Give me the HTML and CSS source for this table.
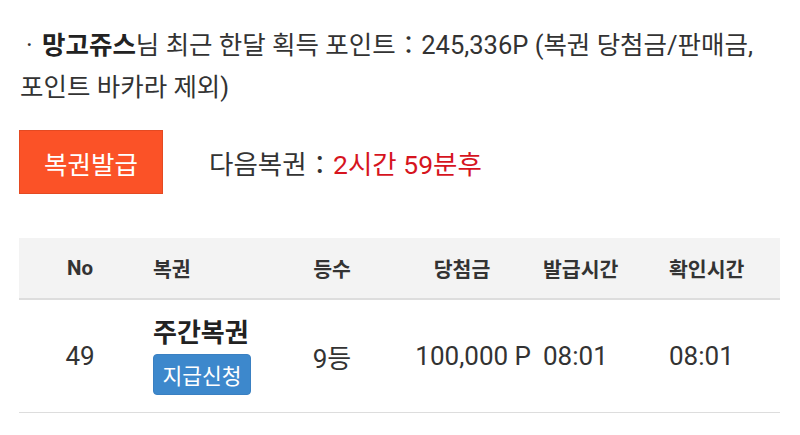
FILE: index.html
```html
<!DOCTYPE html>
<html lang="ko">
<head>
<meta charset="utf-8">
<link rel="stylesheet" href="styles.css">
</head>
<body>
<div class="page">
  <p class="info">· <b>망고쥬스</b>님 최근 한달 획득 포인트：245,336P (복권 당첨금/판매금, 포인트 바카라 제외)</p>
  <div class="actions">
    <button class="issue">복권발급</button>
    <div class="next">다음복권：<span class="remain">2시간 59분후</span></div>
  </div>
  <div class="table">
    <div class="row head">
      <div class="c c-no">No</div>
      <div class="c c-name">복권</div>
      <div class="c c-rank">등수</div>
      <div class="c c-prize">당첨금</div>
      <div class="c c-time">발급시간</div>
      <div class="c c-time">확인시간</div>
    </div>
    <div class="row body">
      <div class="c c-no">49</div>
      <div class="c c-name">
        <div class="ticket">주간복권</div>
        <button class="claim">지급신청</button>
      </div>
      <div class="c c-rank">9등</div>
      <div class="c c-prize">100,000 P</div>
      <div class="c c-time">08:01</div>
      <div class="c c-time">08:01</div>
    </div>
  </div>
</div>
</body>
</html>
```
FILE: styles.css
```css
html, body {
  margin: 0;
  padding: 0;
  background: #ffffff;
}
body {
  font-family: Roboto, "Noto Sans CJK KR", sans-serif;
  color: #333333;
}
.page {
  padding: 24px 20px 0 20px;
}
.info {
  margin: 0;
  font-size: 25.5px;
  line-height: 42px;
  text-indent: 6px;
  word-break: keep-all;
  color: #333333;
}
.info b {
  margin-left: 3px;
  font-weight: 700;
  color: #222222;
}
.actions {
  display: flex;
  align-items: center;
  margin-top: 22px;
  margin-left: -1px;
}
.issue {
  width: 144px;
  height: 64px;
  background: #fb5227;
  border: 1px solid #e44a22;
  color: #ffffff;
  font-family: inherit;
  font-size: 25.5px;
  padding: 0;
  margin: 0;
}
.next {
  margin-left: 46px;
  font-size: 26.5px;
  color: #333333;
}
.remain {
  color: #d6141e;
}
.table {
  margin: 44px 0 0 -1px;
  width: 761px;
}
.row {
  display: grid;
  grid-template-columns: 122px 150px 82px 170px 126px 111px;
  align-items: center;
}
.head {
  height: 60px;
  background: #f3f3f3;
  border-bottom: 2px solid #dddddd;
  font-size: 20.5px;
  font-weight: 700;
  color: #333333;
}
.body {
  height: 112px;
  border-bottom: 1px solid #dddddd;
  font-size: 26px;
  color: #333333;
}
.c-no, .c-rank {
  text-align: center;
}
.c-name {
  padding-left: 12px;
}
.head .c-prize {
  text-align: center;
  padding-left: 8px;
}
.body .c-prize {
  text-align: right;
  padding-right: 12px;
}
.c-time {
  text-align: left;
}
.ticket {
  font-size: 26px;
  font-weight: 700;
  line-height: 32px;
  color: #222222;
}
.claim {
  margin-top: 5px;
  width: 98px;
  height: 41px;
  background: #3d88cc;
  border: 1px solid #3a80c2;
  border-radius: 4px;
  color: #ffffff;
  font-family: inherit;
  font-size: 21.5px;
  padding: 0;
}
```
